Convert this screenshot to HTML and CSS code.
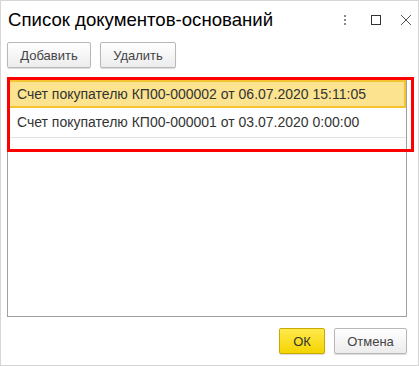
FILE: index.html
```html
<!DOCTYPE html>
<html lang="ru">
  <head>
    <meta charset="UTF-8" />
    <title>Список документов-оснований</title>
    <link rel="stylesheet" href="styles.css">
  </head>
  <body>
    <div class="window">
      <div class="header">
        <h1 class="title">Список документов-оснований</h1>
        <div class="header-icons">
          <svg class="icon icon-more" width="10" height="12" viewBox="0 0 10 12">
            <rect x="4" y="1" width="2" height="2" fill="#8a8a8a" />
            <rect x="4" y="5" width="2" height="2" fill="#8a8a8a" />
            <rect x="4" y="9" width="2" height="2" fill="#8a8a8a" />
          </svg>
          <svg class="icon icon-max" width="12" height="12" viewBox="0 0 12 12">
            <rect x="1.5" y="1.5" width="9" height="9" fill="none" stroke="#333" stroke-width="1" />
          </svg>
          <svg class="icon icon-close" width="12" height="12" viewBox="0 0 12 12">
            <path d="M1 1 L11 11 M11 1 L1 11" stroke="#555" stroke-width="1" fill="none" />
          </svg>
        </div>
      </div>
      <div class="toolbar">
        <button class="btn">Добавить</button>
        <button class="btn">Удалить</button>
      </div>
      <div class="table-wrap">
        <div class="table">
          <div class="row selected">Счет покупателю КП00-000002 от 06.07.2020 15:11:05</div>
          <div class="row">Счет покупателю КП00-000001 от 03.07.2020 0:00:00</div>
          <div class="row empty"></div>
        </div>
        <div class="highlight"></div>
      </div>
      <div class="footer">
        <button class="btn btn-ok">ОК</button>
        <button class="btn btn-cancel">Отмена</button>
      </div>
    </div>
  </body>
</html>
```

FILE: styles.css
```css
body {
  margin: 0;
  font-family: Arial, "Liberation Sans", Helvetica, sans-serif;
  background: #fff;
}

.window {
  width: 419px;
  height: 366px;
  box-sizing: border-box;
  border: 1px solid #d6d6d6;
  padding: 0 6px;
  display: flex;
  flex-direction: column;
}

.header {
  height: 35px;
  display: flex;
  align-items: center;
  justify-content: space-between;
}

.title {
  margin: 0;
  font-size: 18.6px;
  font-weight: normal;
  color: #000;
  padding-left: 1px;
  padding-top: 2px;
}

.header-icons {
  display: flex;
  align-items: center;
  padding-top: 2px;
}

.icon-max {
  margin-left: 20px;
}

.icon-close {
  margin-left: 18px;
}

.toolbar {
  display: flex;
  gap: 9px;
  margin-top: 6px;
}

.btn {
  font-family: Arial, "Liberation Sans", sans-serif;
  font-size: 13px;
  color: #444;
  height: 26px;
  padding: 0 10px;
  border: 1px solid #b8b8b8;
  border-radius: 2px;
  background: linear-gradient(#ffffff, #ececec);
  box-shadow: 0 1px 1px rgba(0, 0, 0, 0.15);
}

.toolbar .btn:first-child {
  width: 84px;
}

.toolbar .btn:last-child {
  width: 76px;
}

.table-wrap {
  position: relative;
  margin-top: 10px;
  width: 400px;
  height: 239px;
}

.table {
  height: 100%;
  box-sizing: border-box;
  border: 1px solid #a0a0a0;
  padding: 1px 0 0;
}

.row {
  height: 30px;
  box-sizing: border-box;
  border-bottom: 1px solid #e2e2e2;
  font-size: 14px;
  color: #333;
  line-height: 29px;
  padding-left: 9px;
}

.row.selected {
  height: 28px;
  background: #fbe390;
  border: 2px solid #f4c430;
  line-height: 24px;
  padding-left: 7px;
}

.row.empty {
  height: 15px;
  border-bottom: none;
}

.highlight {
  position: absolute;
  left: 0;
  top: -1px;
  width: 407px;
  height: 75px;
  box-sizing: border-box;
  border: 3px solid #ff0000;
}

.footer {
  display: flex;
  justify-content: flex-end;
  gap: 9px;
  margin-top: 11px;
  padding-right: 5px;
}

.btn-ok {
  width: 46px;
  color: #333;
  border-color: #c9a800;
  background: linear-gradient(#ffe94d, #f5d400);
}

.btn-cancel {
  width: 73px;
}
```
